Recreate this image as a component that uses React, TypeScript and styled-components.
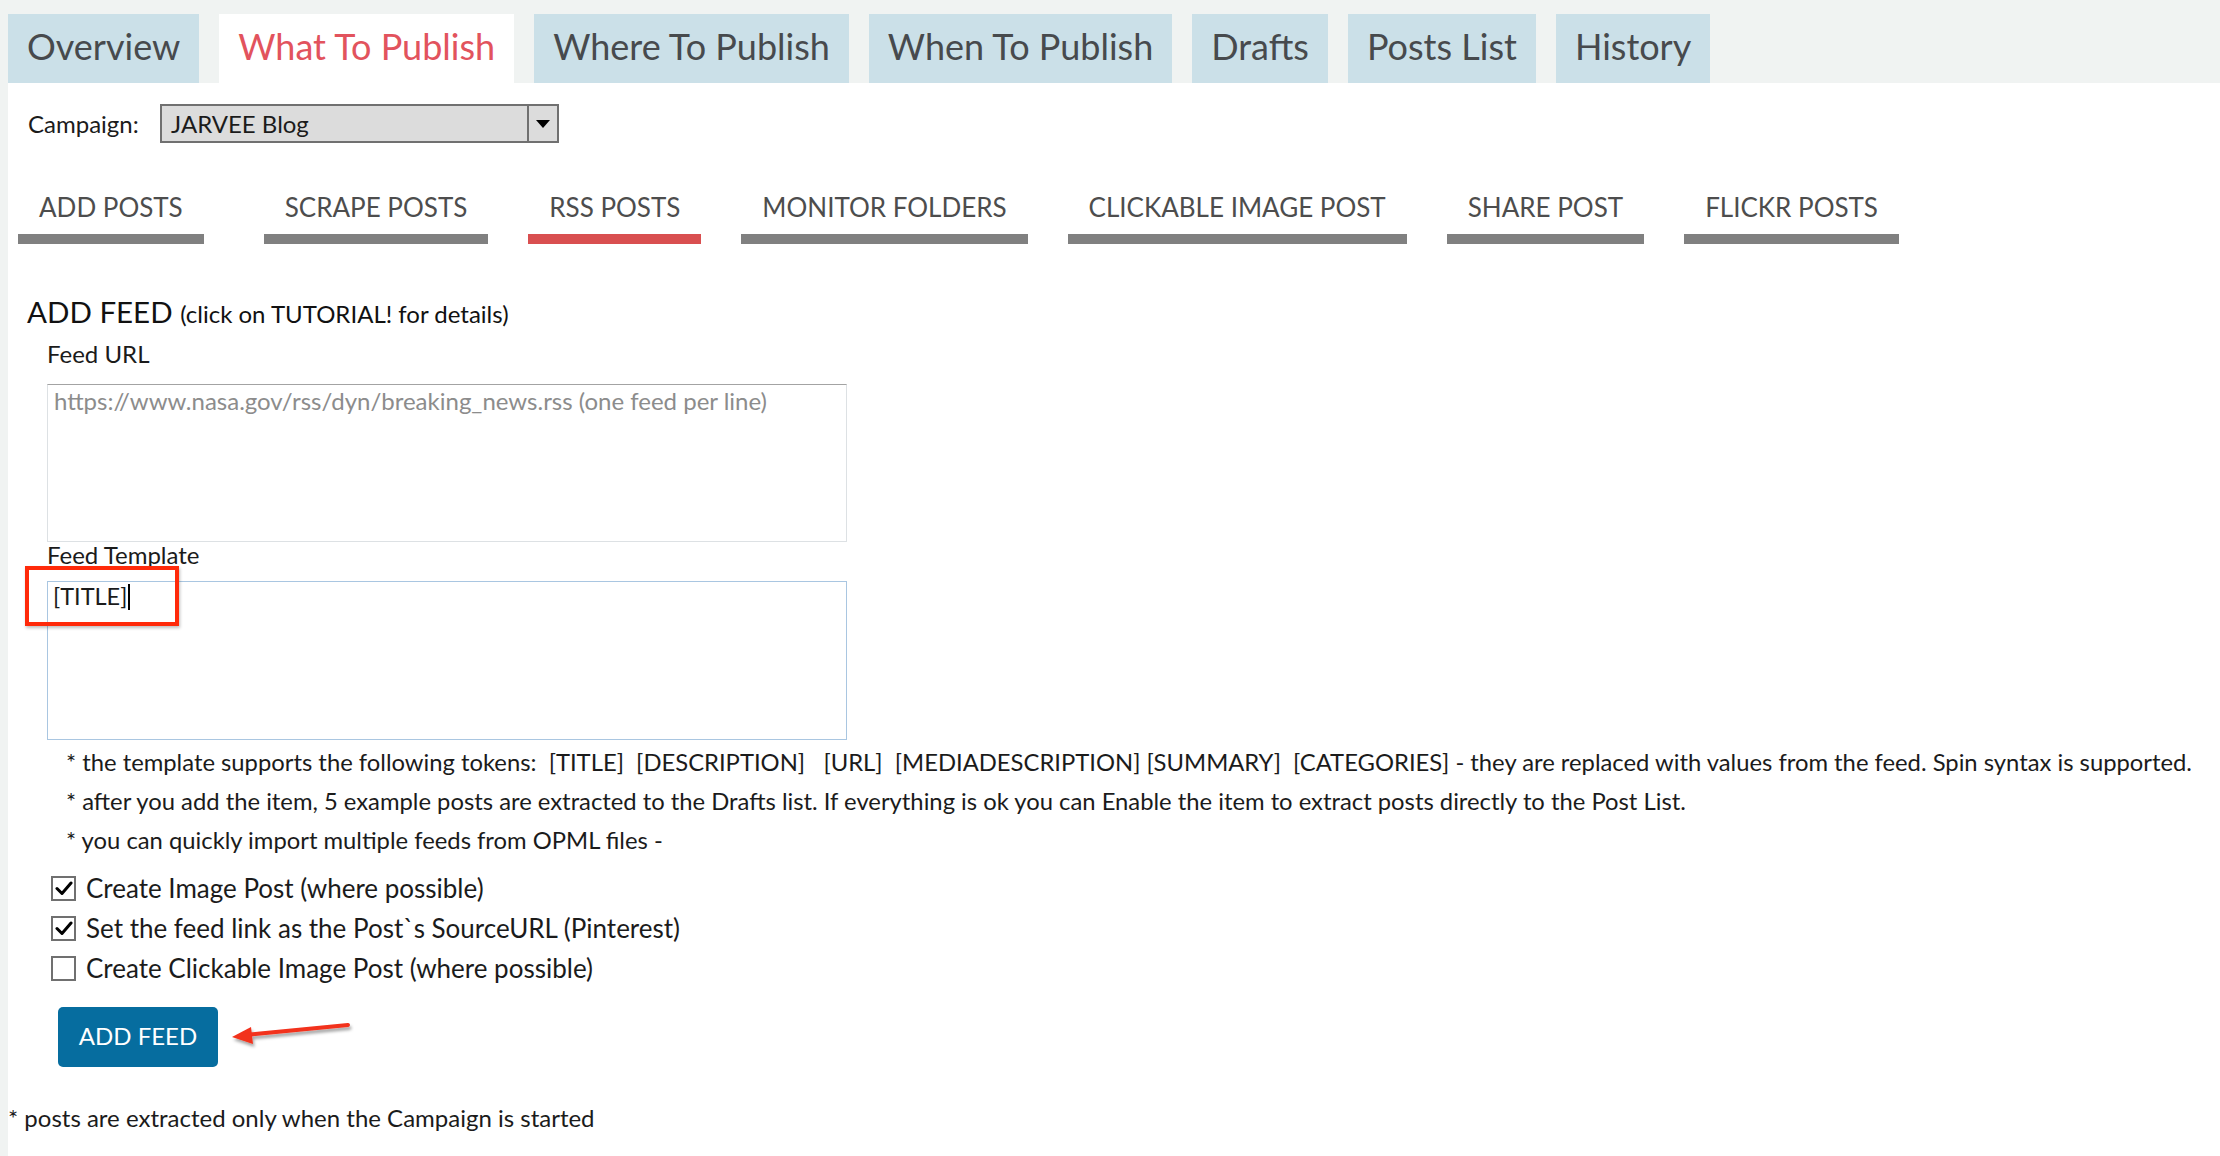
import styled, { createGlobalStyle } from "styled-components";

const GlobalStyle = createGlobalStyle`
  html, body {
    margin: 0;
    padding: 0;
    background: #ffffff;
  }
  body {
    font-family: Lato, "Open Sans", "Liberation Sans", sans-serif;
    color: #1b1b1b;
  }
  * {
    box-sizing: border-box;
  }
`;

const Page = styled.div`
  min-height: 100vh;
  background: #f0f3f2;
  padding-left: 8px;
  display: flex;
  flex-direction: column;
`;

const TabBar = styled.nav`
  display: flex;
  gap: 20px;
  height: 83px;
  padding-top: 14px;
`;

const Tab = styled.div<{ $active?: boolean }>`
  height: 69px;
  padding: 0 19px 5px;
  display: flex;
  align-items: center;
  font-size: 36px;
  background: ${(p) => (p.$active ? "#ffffff" : "#cbe0e8")};
  color: ${(p) => (p.$active ? "#e2535d" : "#474a4d")};
`;

const Panel = styled.main`
  flex: 1;
  background: #ffffff;
  padding-bottom: 20px;
`;

const CampaignRow = styled.div`
  display: flex;
  align-items: center;
  margin: 21px 0 0 20px;
  height: 39px;
  font-size: 24px;
`;

const CampaignLabel = styled.span`
  width: 132px;
`;

const Select = styled.div`
  width: 399px;
  height: 39px;
  display: flex;
  background: #dcdcdc;
  border: 2px solid #707070;
`;

const SelectValue = styled.span`
  flex: 1;
  display: flex;
  align-items: center;
  padding-left: 9px;
  font-size: 24px;
`;

const SelectArrow = styled.span`
  width: 30px;
  border-left: 2px solid #707070;
  display: flex;
  align-items: center;
  justify-content: center;

  &::after {
    content: "";
    border-left: 7px solid transparent;
    border-right: 7px solid transparent;
    border-top: 8px solid #000;
  }
`;

const SubTabs = styled.div`
  display: flex;
  gap: 40px;
  margin: 47px 0 0 10px;

  & > :first-child {
    margin-right: 20px;
  }
`;

const SubTab = styled.div<{ $active?: boolean }>`
  display: flex;
  flex-direction: column;
  align-items: stretch;
  font-size: 26px;
  line-height: 34px;
  color: #4d4d4d;
  text-align: center;

  &::after {
    content: "";
    height: 10px;
    margin-top: 10px;
    background: ${(p) => (p.$active ? "#d94f50" : "#808080")};
  }
`;

const SubTabText = styled.span`
  padding: 0 21px;
`;

const Section = styled.section`
  margin: 50px 0 0 19px;
`;

const Heading = styled.h2`
  margin: 0;
  font-weight: 400;
  font-size: 29.5px;
  line-height: 36px;
  color: #111;
`;

const HeadingHint = styled.span`
  font-size: 24px;
`;

const Field = styled.div<{ $gap: number }>`
  position: relative;
  margin: ${(p) => p.$gap}px 0 0 20px;
`;

const FieldLabel = styled.div`
  font-size: 24px;
  line-height: 24px;
`;

const FeedUrl = styled.textarea`
  display: block;
  width: 800px;
  height: 158px;
  margin-top: 18px;
  padding: 2px 6px;
  resize: none;
  font-family: inherit;
  font-size: 24px;
  line-height: 1.2;
  color: #222;
  border: 1px solid #dde1e4;
  border-top-color: #a3a3a3;
  outline: none;

  &::placeholder {
    color: #8c8c8c;
  }
`;

const TemplateBox = styled.div`
  width: 800px;
  height: 159px;
  margin-top: 14px;
  padding: 0 5px;
  font-size: 23.5px;
  line-height: 1.2;
  border: 1px solid #a9c6e1;
`;

const Caret = styled.span`
  display: inline-block;
  width: 2px;
  height: 26px;
  margin-left: 1px;
  vertical-align: -5px;
  background: #000;
`;

const Highlight = styled.div`
  position: absolute;
  left: -22px;
  top: 23px;
  width: 154px;
  height: 60px;
  border: 4px solid #ff2a0a;
  box-shadow: 1px 2px 3px rgba(0, 0, 0, 0.25);
  pointer-events: none;
`;

const Notes = styled.div`
  margin: 3px 0 0 39px;
  font-size: 23.8px;
  line-height: 39px;
  white-space: pre;
`;

const Checks = styled.div`
  margin: 8px 0 0 24px;
  display: flex;
  flex-direction: column;
`;

const CheckRow = styled.label`
  display: flex;
  align-items: center;
  height: 40px;
  gap: 10px;
  font-size: 26px;
`;

const Box = styled.span`
  width: 25px;
  height: 25px;
  border: 2px solid #707070;
  background: #fff;
  display: flex;
  align-items: center;
  justify-content: center;
`;

const Actions = styled.div`
  display: flex;
  align-items: center;
  margin: 19px 0 0 31px;
`;

const Button = styled.button`
  width: 160px;
  height: 60px;
  padding-bottom: 4px;
  border: none;
  border-radius: 5px;
  background: #066d9f;
  color: #fff;
  font-family: inherit;
  font-size: 24px;
  cursor: pointer;
`;

const Footnote = styled.p`
  margin: 36px 0 0 0;
  font-size: 24px;
  line-height: 29px;
`;

const tabs = [
  "Overview",
  "What To Publish",
  "Where To Publish",
  "When To Publish",
  "Drafts",
  "Posts List",
  "History",
];

const subTabs = [
  "ADD POSTS",
  "SCRAPE POSTS",
  "RSS POSTS",
  "MONITOR FOLDERS",
  "CLICKABLE IMAGE POST",
  "SHARE POST",
  "FLICKR POSTS",
];

const notes = [
  "* the template supports the following tokens:  [TITLE]  [DESCRIPTION]   [URL]  [MEDIADESCRIPTION] [SUMMARY]  [CATEGORIES] - they are replaced with values from the feed. Spin syntax is supported.",
  "* after you add the item, 5 example posts are extracted to the Drafts list. If everything is ok you can Enable the item to extract posts directly to the Post List.",
  "* you can quickly import multiple feeds from OPML files -",
];

const options = [
  { label: "Create Image Post (where possible)", checked: true },
  { label: "Set the feed link as the Post`s SourceURL (Pinterest)", checked: true },
  { label: "Create Clickable Image Post (where possible)", checked: false },
];

function Tick() {
  return (
    <svg width="18" height="16" viewBox="0 0 18 16">
      <path
        d="M2 8.5 L7 13.5 L16 3"
        fill="none"
        stroke="#000"
        strokeWidth="3"
        strokeLinecap="round"
        strokeLinejoin="round"
      />
    </svg>
  );
}

function PointerArrow() {
  return (
    <svg width="124" height="34" viewBox="0 0 124 34" style={{ marginLeft: 12 }}>
      <defs>
        <filter id="shade" x="-10%" y="-40%" width="130%" height="190%">
          <feDropShadow dx="1.5" dy="3" stdDeviation="1.5" floodColor="#000" floodOpacity="0.35" />
        </filter>
      </defs>
      <g filter="url(#shade)">
        <line x1="20" y1="14.5" x2="118" y2="5" stroke="#f2301b" strokeWidth="4" strokeLinecap="round" />
        <polygon points="2,17 21,7 23,24" fill="#f2301b" />
      </g>
    </svg>
  );
}

export default function App() {
  return (
    <>
      <GlobalStyle />
      <Page>
        <TabBar>
          {tabs.map((t, i) => (
            <Tab key={t} $active={i === 1}>
              {t}
            </Tab>
          ))}
        </TabBar>
        <Panel>
          <CampaignRow>
            <CampaignLabel>Campaign:</CampaignLabel>
            <Select>
              <SelectValue>JARVEE Blog</SelectValue>
              <SelectArrow />
            </Select>
          </CampaignRow>

          <SubTabs>
            {subTabs.map((t, i) => (
              <SubTab key={t} $active={i === 2}>
                <SubTabText>{t}</SubTabText>
              </SubTab>
            ))}
          </SubTabs>

          <Section>
            <Heading>
              ADD FEED <HeadingHint>(click on TUTORIAL! for details)</HeadingHint>
            </Heading>
            <Field $gap={10}>
              <FieldLabel>Feed URL</FieldLabel>
              <FeedUrl placeholder="https://www.nasa.gov/rss/dyn/breaking_news.rss (one feed per line)" />
            </Field>
            <Field $gap={1}>
              <FieldLabel>Feed Template</FieldLabel>
              <TemplateBox>
                [TITLE]
                <Caret />
              </TemplateBox>
              <Highlight />
            </Field>

            <Notes>
              {notes.map((n) => (
                <div key={n}>{n}</div>
              ))}
            </Notes>

            <Checks>
              {options.map((o) => (
                <CheckRow key={o.label}>
                  <Box>{o.checked && <Tick />}</Box>
                  {o.label}
                </CheckRow>
              ))}
            </Checks>

            <Actions>
              <Button>ADD FEED</Button>
              <PointerArrow />
            </Actions>
          </Section>

          <Footnote>* posts are extracted only when the Campaign is started</Footnote>
        </Panel>
      </Page>
    </>
  );
}
